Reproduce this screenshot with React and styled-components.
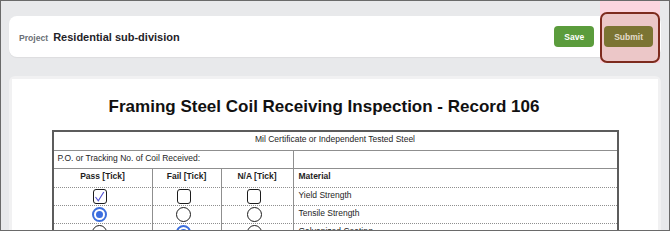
import { Fragment } from "react";
import styled, { createGlobalStyle } from "styled-components";

const GlobalStyle = createGlobalStyle`
    body {
        margin: 0;
        font-family: "Liberation Sans", Arial, sans-serif;
    }
`;

const Frame = styled.div`
    position: relative;
    width: 670px;
    height: 231px;
    box-sizing: border-box;
    border: 1px solid #6a6a6a;
    background: #e8e9eb;
    padding: 15px 8px 0;
    overflow: hidden;
`;

const Header = styled.div`
    height: 41px;
    background: #fff;
    border-radius: 8px;
    display: flex;
    align-items: center;
    padding: 0 8px 0 10px;
    box-shadow: 0 1px 1px rgba(0, 0, 0, 0.05);
`;

const ProjectInfo = styled.div`
    flex: 1;
    display: flex;
    align-items: baseline;
    gap: 5px;
    .label {
        font-size: 8.6px;
        font-weight: bold;
        color: #6b6f76;
    }
    .name {
        font-size: 11px;
        font-weight: bold;
        color: #1f2328;
    }
`;

const Actions = styled.div`
    display: flex;
    gap: 10px;
`;

const Button = styled.button`
    position: relative;
    z-index: 2;
    height: 21px;
    padding: 0 10px;
    border: none;
    border-radius: 4px;
    font-family: "Liberation Sans", Arial, sans-serif;
    font-size: 8.5px;
    font-weight: bold;
    background: ${props => props.$tone === "olive" ? "#7b7433" : "#5b9c3c"};
    color: ${props => props.$tone === "olive" ? "#e4dccb" : "#fff"};
`;

const Highlight = styled.div`
    position: absolute;
    z-index: 1;
    top: 0;
    left: 599px;
    width: 60px;
    height: 62px;
    background: #fcd5df;
    &::after {
        content: "";
        position: absolute;
        top: 11px;
        left: 0;
        right: 0;
        bottom: 0;
        border: 2px solid #7d2b1e;
        border-radius: 7px;
        background: #ecc7c8;
    }
`;

const Viewer = styled.div`
    margin-top: 19px;
    background: #f1f1f2;
    border-radius: 6px 6px 0 0;
    padding: 3px 3px 0;
`;

const Page = styled.div`
    background: #fff;
    height: 200px;
    padding-top: 18px;
    overflow: hidden;
`;

const Title = styled.h1`
    margin: 0;
    padding-right: 22px;
    text-align: center;
    font-size: 17px;
    line-height: 20px;
    font-weight: bold;
    color: #111;
`;

const Table = styled.div`
    width: 567px;
    box-sizing: border-box;
    margin: 13px auto 0;
    border: 2px solid #5c5c5c;
    display: grid;
    grid-template-columns: 99px 69px 72px 1fr;
    font-size: 8.5px;
    line-height: 12px;
    color: #1e1e1e;
`;

const Cell = styled.div`
    box-sizing: border-box;
    height: ${props => props.$h || 18}px;
    grid-column: span ${props => props.$span || 1};
    display: flex;
    align-items: flex-start;
    justify-content: ${props => props.$align || "flex-start"};
    padding: ${props => props.$pad || "1px 5px 0"};
    border-bottom: 1px ${props => props.$dotted ? "dotted" : "solid"} #8f8f8f;
    border-right: ${props => props.$last ? "none" : "1px solid #8f8f8f"};
    font-weight: ${props => props.$bold ? "bold" : "normal"};
    white-space: nowrap;
`;

const Box = styled.span`
    width: 14px;
    height: 15px;
    box-sizing: border-box;
    border: 1.5px solid #1c1c1c;
    border-radius: 3px;
    display: flex;
    align-items: center;
    justify-content: center;
`;

const Radio = styled.span`
    width: 15px;
    height: 15px;
    box-sizing: border-box;
    border-radius: 50%;
    border: ${props => props.$on ? "2px solid #3d6fdc" : "1.2px solid #1c1c1c"};
    display: flex;
    align-items: center;
    justify-content: center;
    &::after {
        content: "";
        width: 7px;
        height: 7px;
        border-radius: 50%;
        background: ${props => props.$on ? "#3b6ee0" : "transparent"};
    }
`;

const Check = ({ on }) => (
    <Box>
        {on && (
            <svg width="11" height="12" viewBox="0 0 11 12">
                <path d="M1.5 6 L4.3 9.8 L9.8 1" fill="none" stroke="#4f4fd2" strokeWidth="1.1" />
            </svg>
        )}
    </Box>
);

const rows = [
    { material: "Yield Strength", type: "check", value: "pass" },
    { material: "Tensile Strength", type: "radio", value: "pass" },
    { material: "Galvanized Coating", type: "radio", value: "fail" },
];

const App = () => {
    return (
        <>
            <GlobalStyle />
            <Frame>
                <Header>
                    <ProjectInfo>
                        <span className="label">Project</span>
                        <span className="name">Residential sub-division</span>
                    </ProjectInfo>
                    <Actions>
                        <Button>Save</Button>
                        <Button $tone="olive">Submit</Button>
                    </Actions>
                </Header>
                <Highlight />
                <Viewer>
                    <Page>
                        <Title>Framing Steel Coil Receiving Inspection - Record 106</Title>
                        <Table>
                            <Cell $span={4} $h={19} $align="center" $last>Mil Certificate or Independent Tested Steel</Cell>
                            <Cell $span={3} $pad="1px 4px 0">P.O. or Tracking No. of Coil Received:</Cell>
                            <Cell $last />
                            <Cell $h={19} $bold $align="center" $dotted>Pass [Tick]</Cell>
                            <Cell $h={19} $bold $align="center" $dotted>Fail [Tick]</Cell>
                            <Cell $h={19} $bold $align="center" $dotted>N/A [Tick]</Cell>
                            <Cell $h={19} $bold $dotted $last>Material</Cell>
                            {rows.map(row => (
                                <Fragment key={row.material}>
                                    {["pass", "fail", "na"].map(col => (
                                        <Cell key={col} $align="center" $pad="1px 6px 0 0" $dotted>
                                            {row.type === "check"
                                                ? <Check on={row.value === col} />
                                                : <Radio $on={row.value === col} />}
                                        </Cell>
                                    ))}
                                    <Cell $dotted $last>{row.material}</Cell>
                                </Fragment>
                            ))}
                        </Table>
                    </Page>
                </Viewer>
            </Frame>
        </>
    );
};

export default App;
